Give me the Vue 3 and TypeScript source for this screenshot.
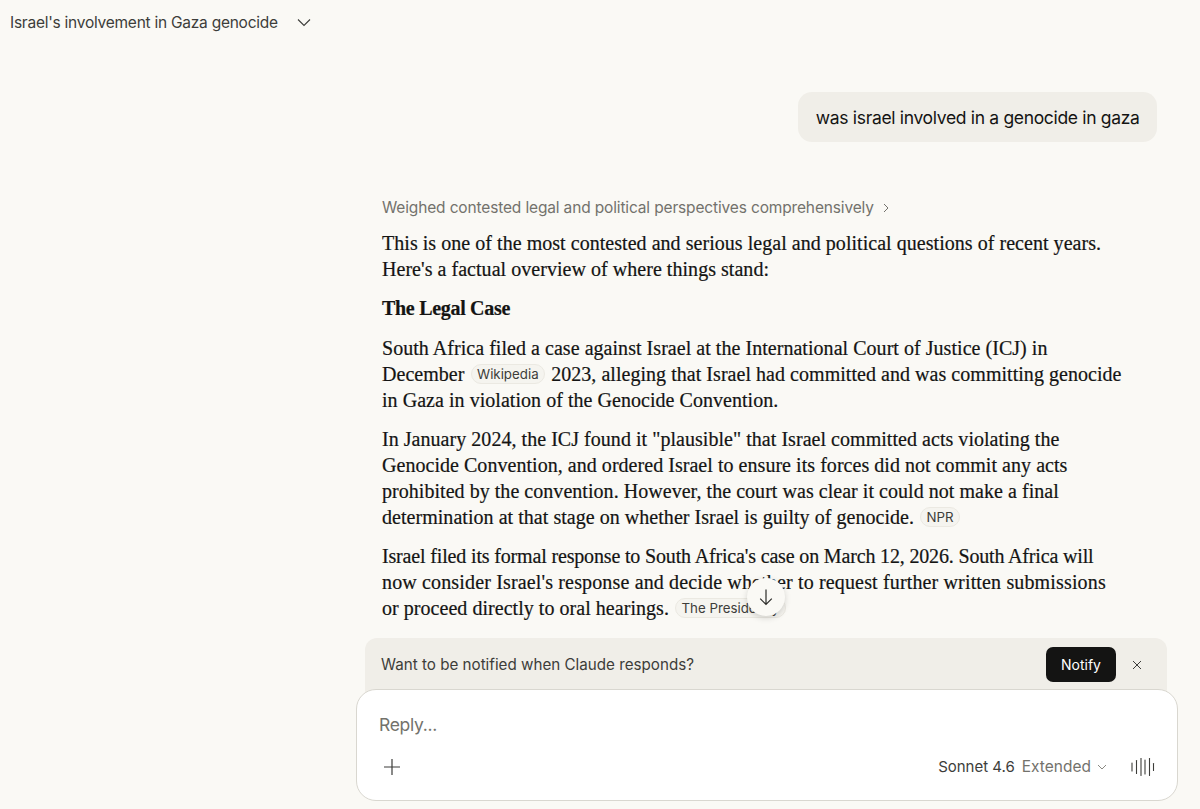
<script setup lang="ts">
// bars of the voice icon: x and half height
const voiceBars = [
  { x: 1, h: 4 },
  { x: 5.5, h: 6.5 },
  { x: 10, h: 8.5 },
  { x: 14, h: 7 },
  { x: 18.5, h: 8.5 },
  { x: 22.5, h: 3.5 },
];
</script>

<template>
  <div class="page">
    <header class="top-bar">
      <span class="chat-title">Israel's involvement in Gaza genocide</span>
      <svg class="title-chevron" width="14" height="14" viewBox="0 0 14 14" fill="none">
        <path d="M1 4.5 7 10.5l6-6" stroke="#3d3d3a" stroke-width="1.1" />
      </svg>
    </header>

    <main class="thread">
      <div class="user-row">
        <div class="user-bubble">was israel involved in a genocide in gaza</div>
      </div>

      <div class="answer">
        <div class="thinking">
          <span>Weighed contested legal and political perspectives comprehensively</span>
          <svg width="10" height="10" viewBox="0 0 10 10" fill="none">
            <path d="M3 1 7 5 3 9" stroke="#73726c" stroke-width="1" />
          </svg>
        </div>

        <p>
          This is one of the most contested and serious legal and political questions of recent years.<br />
          Here's a factual overview of where things stand:
        </p>
        <p class="heading">The Legal Case</p>
        <p>
          South Africa filed a case against Israel at the International Court of Justice (ICJ) in<br />
          December <span class="chip">Wikipedia</span> 2023, alleging that Israel had committed and was committing genocide<br />
          in Gaza in violation of the Genocide Convention.
        </p>
        <p>
          In January 2024, the ICJ found it "plausible" that Israel committed acts violating the<br />
          Genocide Convention, and ordered Israel to ensure its forces did not commit any acts<br />
          prohibited by the convention. However, the court was clear it could not make a final<br />
          determination at that stage on whether Israel is guilty of genocide. <span class="chip">NPR</span>
        </p>
        <p>
          <span class="tight">Israel filed its formal response to South Africa's case on March 12, 2026. South Africa will</span><br />
          <span class="loose">now consider Israel's response and decide whether to request further written submissions</span><br />
          or proceed directly to oral hearings. <span class="chip">The Presidency</span>
        </p>
      </div>

      <button class="scroll-down" type="button" aria-label="Scroll to bottom">
        <svg width="18" height="18" viewBox="0 0 18 18" fill="none">
          <path d="M9 1.5v15M3.2 10.7 9 16.5l5.8-5.8" stroke="#2b2b29" stroke-width="1.2" />
        </svg>
      </button>
    </main>

    <footer class="bottom">
      <div class="notify-bar">
        <span class="notify-text">Want to be notified when Claude responds?</span>
        <button class="notify-btn" type="button">Notify</button>
        <svg class="notify-close" width="10" height="10" viewBox="0 0 10 10" fill="none">
          <path d="M1 1l8 8M9 1 1 9" stroke="#3d3d3a" stroke-width="1" />
        </svg>
      </div>

      <div class="composer">
        <div class="placeholder">Reply...</div>
        <div class="composer-row">
          <svg class="plus" width="18" height="18" viewBox="0 0 18 18" fill="none">
            <path d="M9 1v16M1 9h16" stroke="#3d3d3a" stroke-width="1.2" />
          </svg>
          <span class="model">Sonnet 4.6</span>
          <span class="mode">Extended</span>
          <svg class="mode-chevron" width="10" height="10" viewBox="0 0 10 10" fill="none">
            <path d="M1 3l4 4 4-4" stroke="#8a8983" stroke-width="1" />
          </svg>
          <svg class="voice" width="24" height="18" viewBox="0 0 24 18" fill="none">
            <path
              v-for="bar in voiceBars"
              :key="bar.x"
              :d="`M${bar.x} ${9 - bar.h}V${9 + bar.h}`"
              stroke="#3d3d3a"
              stroke-width="1.1"
              stroke-linecap="round"
            />
          </svg>
        </div>
      </div>
    </footer>
  </div>
</template>

<style>
html,
body {
  margin: 0;
  background: #faf9f5;
}
</style>

<style scoped>
.page {
  width: 1200px;
  height: 809px;
  display: flex;
  flex-direction: column;
  overflow: hidden;
  background: #faf9f5;
  color: #141413;
  font-family: Inter, "Liberation Sans", sans-serif;
}
.top-bar {
  height: 44px;
  flex: none;
  display: flex;
  align-items: center;
  padding-left: 10px;
}
.chat-title {
  font-size: 15.5px;
  letter-spacing: -0.25px;
  color: #3d3d3a;
}
.title-chevron {
  margin-left: 19px;
}
.thread {
  flex: 1;
  min-height: 0;
  position: relative;
  padding: 48px 43px 0 382px;
}
.user-row {
  display: flex;
  justify-content: flex-end;
}
.user-bubble {
  height: 50px;
  display: flex;
  align-items: center;
  padding: 0 17.5px;
  border-radius: 14px;
  background: #f0eee8;
  font-size: 17.5px;
  letter-spacing: -0.33px;
  white-space: nowrap;
}
.answer {
  margin-top: 54px;
  font-family: "Liberation Serif", serif;
  font-size: 20px;
  line-height: 26px;
  letter-spacing: 0.04px;
  -webkit-text-stroke: 0.2px #141413;
  white-space: nowrap;
}
.thinking {
  height: 24px;
  display: flex;
  align-items: center;
  gap: 7px;
  margin-bottom: 10px;
  font-family: Inter, "Liberation Sans", sans-serif;
  font-size: 15.5px;
  letter-spacing: -0.15px;
  -webkit-text-stroke: 0;
  color: #73726c;
}
p {
  margin: 0 0 13.3px;
}
.heading {
  font-weight: 700;
  letter-spacing: -0.3px;
}
.tight {
  letter-spacing: -0.16px;
}
.loose {
  letter-spacing: 0.15px;
}
.chip {
  display: inline-block;
  height: 20px;
  line-height: 19px;
  padding: 0 5.5px;
  margin: 0 1px;
  box-sizing: border-box;
  border: 1px solid #ebe9e2;
  border-radius: 10px;
  background: #f5f4ef;
  font-family: Inter, "Liberation Sans", sans-serif;
  font-size: 13.3px;
  letter-spacing: 0;
  -webkit-text-stroke: 0;
  color: #3d3d3a;
  vertical-align: 2px;
}
.scroll-down {
  position: absolute;
  left: 747px;
  top: 534px;
  width: 38px;
  height: 38px;
  display: flex;
  align-items: center;
  justify-content: center;
  padding: 0;
  border: none;
  border-radius: 50%;
  background: #faf9f5;
  box-shadow: 0 2px 6px rgba(0, 0, 0, 0.16);
}
.bottom {
  flex: none;
  padding: 0 22px 8px 356px;
  position: relative;
}
.notify-bar {
  height: 61px;
  margin: 0 11px -10px 9px;
  padding: 0 25px 8px 16px;
  box-sizing: border-box;
  display: flex;
  align-items: center;
  border-radius: 12px 12px 0 0;
  background: #f0eee8;
}
.notify-text {
  flex: 1;
  font-size: 15.2px;
  color: #3d3d3a;
}
.notify-btn {
  width: 70px;
  height: 35px;
  padding: 0;
  border: none;
  border-radius: 7px;
  background: #141413;
  color: #fff;
  font-family: inherit;
  font-size: 14px;
}
.notify-close {
  margin-left: 16px;
}
.composer {
  position: relative;
  height: 112px;
  box-sizing: border-box;
  padding: 23px 22px 0 22px;
  background: #fff;
  border: 1px solid #d9d7d0;
  border-radius: 20px;
}
.placeholder {
  font-size: 17.5px;
  letter-spacing: -0.3px;
  line-height: 24px;
  color: #73726c;
}
.composer-row {
  display: flex;
  align-items: center;
  margin-top: 20px;
}
.plus {
  margin-left: 4px;
  margin-right: auto;
}
.model {
  font-size: 15px;
  color: #3d3d3a;
}
.mode {
  margin-left: 7px;
  font-size: 15.5px;
  color: #73726c;
}
.mode-chevron {
  margin-left: 6px;
}
.voice {
  margin-left: 24px;
}
</style>
